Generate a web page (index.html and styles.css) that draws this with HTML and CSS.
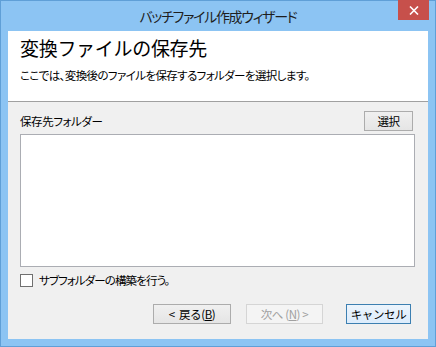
FILE: index.html
```html
<!DOCTYPE html>
<html lang="ja">
<head>
  <meta charset="UTF-8">
  <title>バッチファイル作成ウィザード</title>
  <link rel="stylesheet" href="styles.css">
</head>
<body>
  <div class="window">
    <div class="titlebar">
      <span class="caption">バッチファイル作成ウィザード</span>
      <a class="close">
        <svg width="10" height="9" viewBox="0 0 10 9"><path d="M1 0.5 L9 8.5 M9 0.5 L1 8.5" stroke="#fff" stroke-width="1.6"/></svg>
      </a>
    </div>
    <div class="client">
      <div class="header">
        <h1>変換ファイルの保存先</h1>
        <p>ここでは、変換後のファイルを保存するフォルダーを選択します。</p>
      </div>
      <div class="content">
        <div class="folder-row">
          <span>保存先フォルダー</span>
          <button class="btn select">選択</button>
        </div>
        <div class="listbox"></div>
        <label class="check">
          <span class="box"></span>
          サブフォルダーの構築を行う。
        </label>
        <div class="buttons">
          <button class="btn back">&lt;&nbsp; 戻る(<u>B</u>)</button>
          <button class="btn next" disabled>次へ (<u>N</u>) &gt;</button>
          <button class="btn cancel">キャンセル</button>
        </div>
      </div>
    </div>
  </div>
</body>
</html>
```

FILE: styles.css
```css
* {
  box-sizing: border-box;
}
body {
  margin: 0;
  font-family: "Noto Sans CJK JP", "Noto Sans", sans-serif;
  font-feature-settings: "palt";
  color: #000;
}
.window {
  width: 436px;
  height: 347px;
  border: 1px solid #5f9fd7;
  background: #8cc4f3;
  padding: 0 7px 7px;
  display: flex;
  flex-direction: column;
}
.titlebar {
  height: 30px;
  position: relative;
  display: flex;
  align-items: center;
  justify-content: center;
}
.caption {
  font-size: 14px;
  letter-spacing: -1.3px;
  color: #1e1e1e;
  margin-top: -1px;
}
.close {
  position: absolute;
  top: -1px;
  right: -1px;
  width: 31px;
  height: 20px;
  background: #c7504b;
  display: flex;
  align-items: center;
  justify-content: center;
}
.client {
  flex: 1;
  background: #f0f0f0;
  display: flex;
  flex-direction: column;
}
.header {
  background: #fff;
  height: 71px;
  border-bottom: 1px solid #a0a0a0;
  padding: 2px 12px 0;
}
.header h1 {
  margin: 0;
  font-size: 19px;
  letter-spacing: -0.3px;
  font-weight: normal;
  font-feature-settings: normal;
  line-height: 30px;
}
.header p {
  margin: 4px 0 0;
  font-size: 11.5px;
  letter-spacing: -0.6px;
  line-height: 16px;
}
.content {
  flex: 1;
  padding: 9px 13px 15px 12px;
  display: flex;
  flex-direction: column;
  font-size: 11.5px;
  letter-spacing: -0.4px;
}
.folder-row {
  display: flex;
  justify-content: space-between;
  align-items: center;
  padding-right: 2px;
}
.btn {
  font-family: inherit;
  font-size: 11.5px;
  letter-spacing: -0.4px;
  height: 20px;
  padding: 0;
  border: 1px solid #acacac;
  background: linear-gradient(#f0f0f0, #e5e5e5);
  color: #000;
}
.select {
  width: 49px;
}
.listbox {
  margin-top: 3px;
  height: 133px;
  background: #fff;
  border: 1px solid #abadb3;
}
.check {
  display: flex;
  align-items: center;
  gap: 6px;
  margin-top: 6px;
  line-height: 14px;
  letter-spacing: -0.9px;
}
.box {
  width: 13px;
  height: 13px;
  border: 1px solid #707070;
  background: #fff;
}
.buttons {
  margin-top: auto;
  display: flex;
  padding-left: 133px;
}
.back {
  width: 78px;
}
.next {
  width: 77px;
  margin-left: 15px;
  color: #a0a0a0;
  border-color: #d5d5d5;
  background: #f4f4f4;
}
.cancel {
  width: 65px;
  margin-left: 23px;
  border-color: #3c7fb1;
  background: linear-gradient(#ecf4fc, #dcecfc);
}
```
